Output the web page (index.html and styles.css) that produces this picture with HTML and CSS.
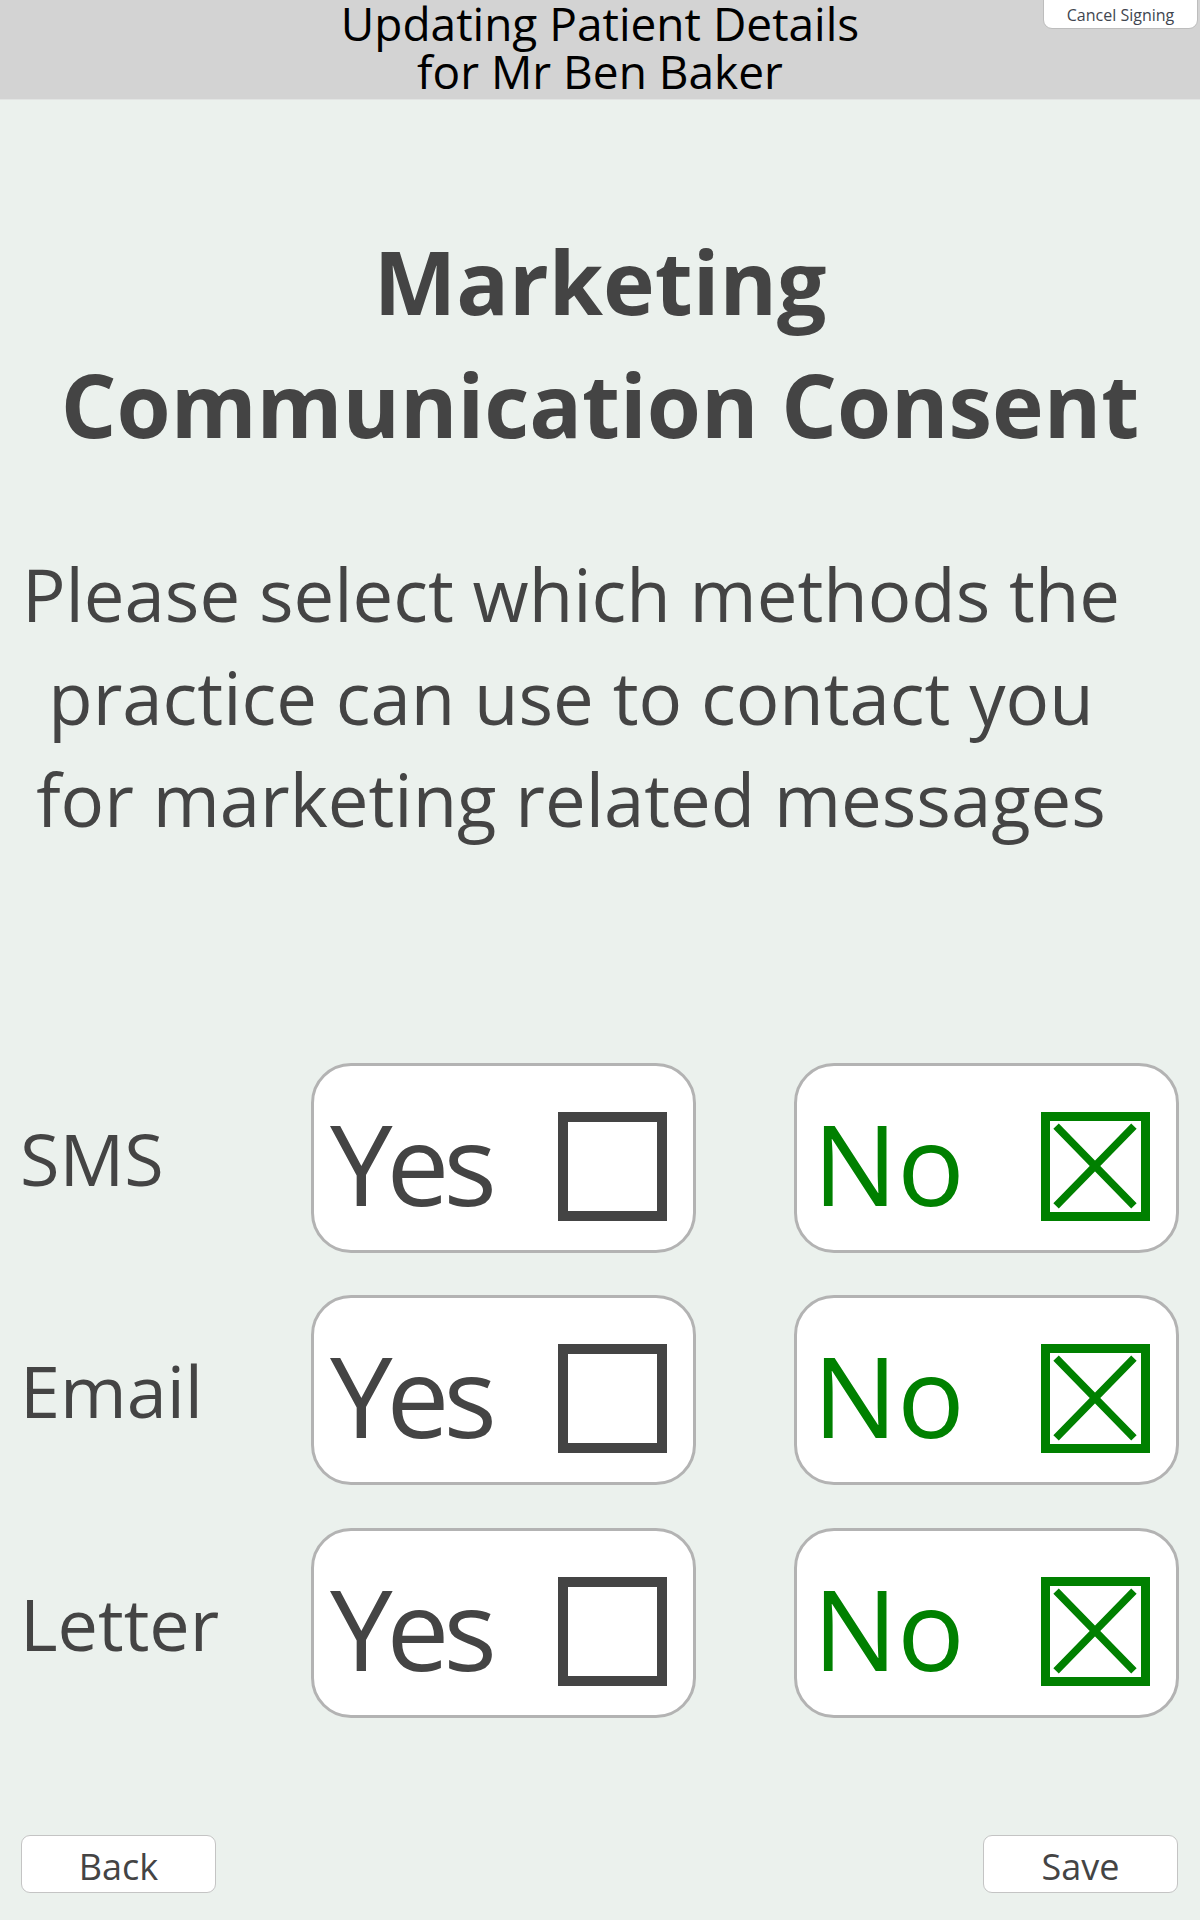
FILE: index.html
```html
<!DOCTYPE html>
<html lang="en">
<head>
<meta charset="utf-8">
<title>Updating Patient Details</title>
<link rel="stylesheet" href="styles.css">
</head>
<body>
<header class="topbar">
  <h1 class="topbar-title"><span class="topbar-line">Updating Patient Details</span><span class="topbar-line">for Mr Ben Baker</span></h1>
  <button class="cancel-btn" type="button">Cancel Signing</button>
</header>
<main class="page">
  <h2 class="title">Marketing<br>Communication Consent</h2>
  <p class="intro">Please select which methods the<br>practice can use to contact you<br>for marketing related messages</p>
  <div class="consent-grid">
    <div class="method">SMS</div>
    <div class="choice"><span class="choice-text yes">Yes</span><span class="box"></span></div>
    <div class="choice choice-on"><span class="choice-text">No</span><span class="box box-on"><svg viewBox="0 0 89 89" class="xmark"><path d="M6 5 L83 84 M83 5 L6 84"/></svg></span></div>

    <div class="method">Email</div>
    <div class="choice"><span class="choice-text yes">Yes</span><span class="box"></span></div>
    <div class="choice choice-on"><span class="choice-text">No</span><span class="box box-on"><svg viewBox="0 0 89 89" class="xmark"><path d="M6 5 L83 84 M83 5 L6 84"/></svg></span></div>

    <div class="method">Letter</div>
    <div class="choice"><span class="choice-text yes">Yes</span><span class="box"></span></div>
    <div class="choice choice-on"><span class="choice-text">No</span><span class="box box-on"><svg viewBox="0 0 89 89" class="xmark"><path d="M6 5 L83 84 M83 5 L6 84"/></svg></span></div>
  </div>
  <footer class="actions">
    <button class="nav-btn" type="button">Back</button>
    <button class="nav-btn" type="button">Save</button>
  </footer>
</main>
</body>
</html>
```
FILE: styles.css
```css
* { box-sizing: border-box; }
html, body { margin: 0; padding: 0; }
body {
  background: #ebf1ed;
  font-family: "Open Sans", "Noto Sans", sans-serif;
  color: #444;
}
.topbar {
  position: relative;
  height: 100px;
  background: #d3d3d3;
  border-bottom: 1px solid #e2e4e3;
  padding-top: 0;
}
.topbar-title {
  margin: 0;
  display: flex;
  flex-direction: column;
  align-items: center;
  font-weight: 400;
  font-size: 46px;
  line-height: 47px;
  color: #000;
}
.topbar-line {
  display: block;
  height: 47px;
}
.topbar-line + .topbar-line {
  margin-top: 1px;
}
.cancel-btn {
  position: absolute;
  right: 2px;
  top: -10px;
  width: 155px;
  height: 39px;
  padding: 10px 0 0;
  background: #fff;
  border: 1px solid #bdbdbd;
  border-radius: 9px;
  font-family: "Open Sans", sans-serif;
  font-size: 16px;
  color: #3f4650;
  text-align: center;
}
.page {
  padding-top: 120px;
}
.title {
  margin: 0;
  text-align: center;
  font-weight: 700;
  font-size: 87.5px;
  line-height: 123px;
  color: #444;
}
.intro {
  margin: 77px 0 0;
  padding-right: 58px;
  text-align: center;
  font-size: 72.5px;
  line-height: 102.5px;
  color: #444;
}
.consent-grid {
  margin-top: 212px;
  padding-left: 20px;
  display: grid;
  grid-template-columns: 193px 385px 385px;
  column-gap: 98px;
  row-gap: 42.5px;
}
.method {
  display: flex;
  align-items: center;
  font-size: 72px;
  color: #444;
}
.choice {
  height: 190px;
  background: #fff;
  border: 3px solid #b3b3b3;
  border-radius: 40px;
  display: flex;
  align-items: center;
  justify-content: space-between;
  padding: 10px 26px 0 16px;
}
.choice-text {
  font-size: 112px;
  line-height: 1;
  color: #444;
}
.choice-text.yes {
  letter-spacing: -6px;
}
.choice-on .choice-text { color: #008000; }
.box {
  width: 109px;
  height: 109px;
  margin-top: 7px;
  border: 10px solid #444;
  flex: none;
}
.box-on {
  border-color: #008000;
  border-width: 9.5px;
}
.xmark {
  display: block;
  width: 90px;
  height: 90px;
  fill: none;
  stroke: #008000;
  stroke-width: 7.5;
}
.actions {
  margin-top: 117px;
  display: flex;
  justify-content: space-between;
  padding: 0 22px 0 21px;
}
.nav-btn {
  width: 195px;
  height: 58px;
  background: #fff;
  border: 1px solid #c4c4c4;
  border-radius: 9px;
  padding: 7px 0 0;
  font-family: "Open Sans", sans-serif;
  font-size: 36px;
  line-height: 1;
  color: #444;
}
```
